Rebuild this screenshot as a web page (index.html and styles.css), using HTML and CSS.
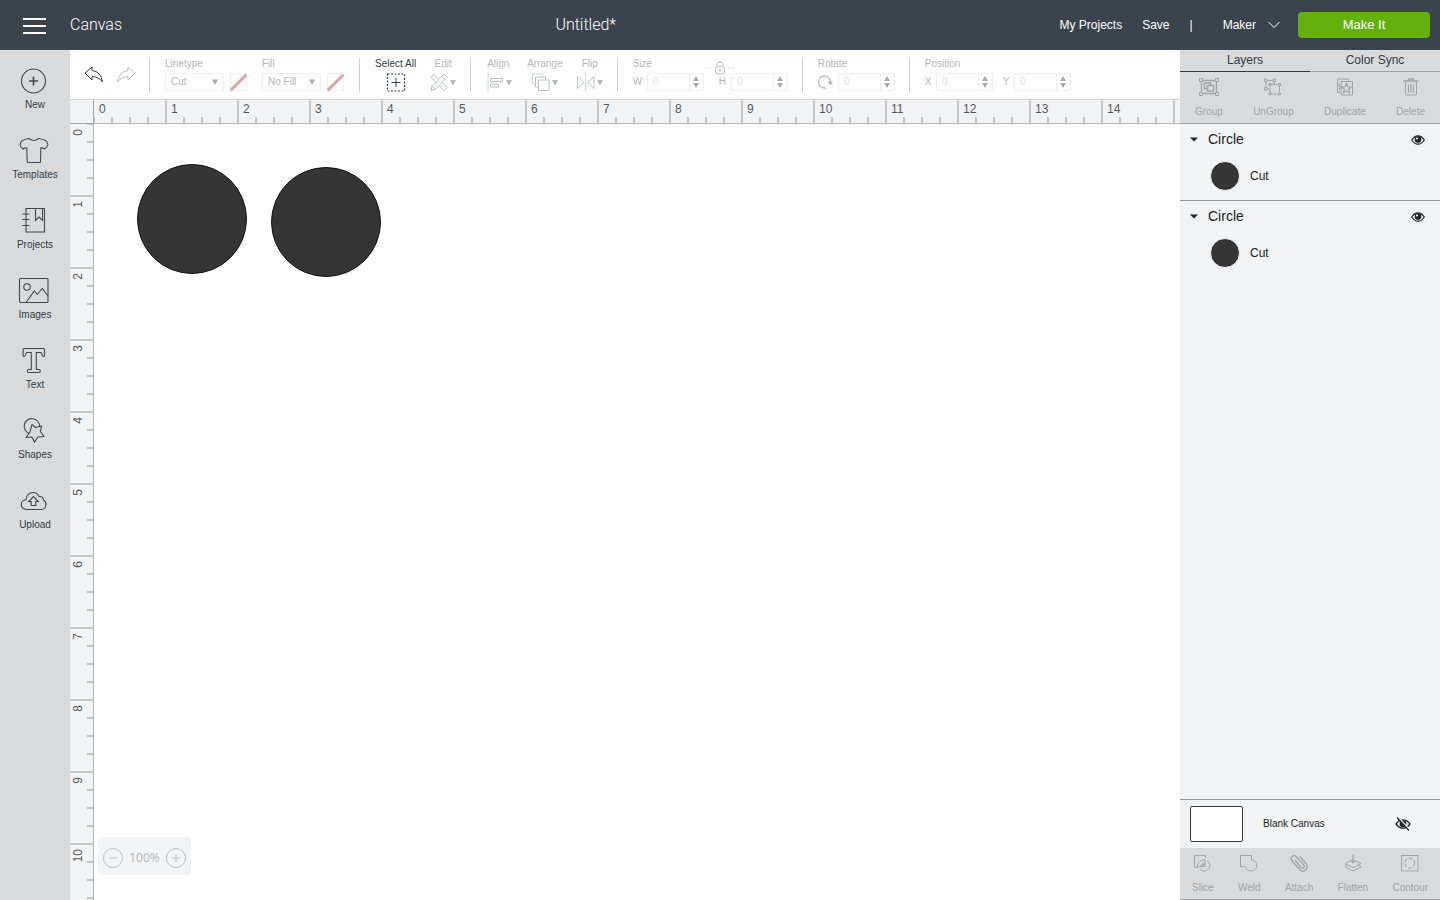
FILE: index.html
```html
<!DOCTYPE html>
<html lang="en">
<head>
<meta charset="utf-8">
<meta name="viewport" content="width=device-width, initial-scale=1">
<title>Canvas</title>
<link rel="stylesheet" href="styles.css">
</head>
<body>
<header class="topbar">
  <button class="menu" aria-label="Menu"><svg width="24" height="16" viewBox="0 0 24 16"><path d="M0 1h23M0 8h23M0 15h23" stroke="#fff" stroke-width="2"/></svg></button>
  <span class="light">Canvas</span>
  <h1 class="title light">Untitled*</h1>
  <nav class="topnav">
    <a href="#">My Projects</a>
    <a href="#">Save</a>
    <span class="bar">|</span>
    <button class="machine">Maker <svg width="12" height="8" viewBox="0 0 12 8"><path d="M.5 1 6 6.500 11.500 1" fill="none" stroke="#fff"/></svg></button>
    <button class="make">Make It</button>
  </nav>
</header>
<main class="app">
  <nav class="sidebar">
    <button><svg viewBox="1 0 30 28"><circle cx="14.500" cy="14" r="12"/><path d="M14.500 9.500v9M10 14h9" stroke-width="1.600"/></svg>New</button>
    <button><svg viewBox="1 0 30 28"><path d="M10 1.500Q14.800 5.500 19.600 1.500Q24.500 2.200 26.500 3.500Q28.500 5 29 7.500Q28.500 10 25.500 12Q23.500 10.500 21.800 11L21.500 24.500Q21.500 25.500 20.500 25.500H9.200Q8.200 25.500 8.200 24.500L7.800 11Q6 10.500 4 12Q1.500 10 1 7.500Q1.500 5 3.500 3.500Q5.500 2.200 10 1.500z"/></svg>Templates</button>
    <button><svg viewBox="1 0 30 28"><path d="M7 1.500h18.500v23.500H7zM3.500 7h7M3.500 12.500h7M3.500 18.500h7M16.500 1.500v12l3.500-3.500 3.500 3.500v-12"/></svg>Projects</button>
    <button><svg viewBox="1 0 30 28"><rect x=".5" y="1.500" width="28.500" height="24" rx="1"/><circle cx="8" cy="10" r="3.200"/><path d="M7 25.500 15.300 14l3 3.500 5-6 5.500 7.500"/></svg>Images</button>
    <button><svg viewBox="1 0 30 28"><path d="M4.500 1.500h20q1 0 1 1v6q0 1-1 1t-1.200-1l-.6-2q-.4-1-1.400-1h-4v17h2.500q1.500 0 1.500 1.500t-1.500 1.500h-10q-1.500 0-1.500-1.500t1.500-1.500h2.500v-17h-4q-1 0-1.400 1l-.6 2q-.2 1-1.200 1t-1-1v-6q0-1 .9-1z"/></svg>Text</button>
    <button><svg viewBox="1 0 30 28"><path d="M10 16.500A7.700 7.700 0 1 1 20.600 9.300"/><path d="M13 7.300 16.500 10.500 22.500 9 21.300 14.300 25 19.500 18.700 20 15.500 25.300 13 20 7 20.500 11 15z" stroke-linejoin="round"/></svg>Shapes</button>
    <button><svg viewBox="1 0 30 28"><path d="M8 22.500q-5.500-.3-5.800-5 .3-4.200 4.800-4.800 1-7.200 7-7.200 4.200 0 6 4 4.200-.5 4.500 3.800 2.500 1.200 2.500 4.400-.5 4.300-4.500 4.800z"/><path d="M12.200 18.500v-4H9.700l4.800-5 4.800 5h-2.500v4z"/></svg>Upload</button>
  </nav>

  <section class="editor">
    <div class="toolbar">
      <div class="group history">
        <button aria-label="Undo" class="on"><svg width="20" height="18" viewBox="0 0 20 18"><path d="M1 7 8 1v3.500q9 1 10.500 11.500-3-5-10.500-5.500V14z"/></svg></button>
        <button aria-label="Redo"><svg width="20" height="18" viewBox="0 0 20 18"><path d="M19 7 12 1v3.500q-9 1-10.500 11.500 3-5 10.500-5.500V14z"/></svg></button>
      </div>
      <div class="group linefill">
        <div class="tool">
          <label for="linetype">Linetype</label>
          <div class="row">
            <span class="pick"><select id="linetype"><option>Cut</option></select><svg width="6" height="6" viewBox="0 0 6 6"><path d="M0 .5h6L3 6z"/></svg></span>
            <button class="swatch" aria-label="Line color"><svg width="17" height="17" viewBox="0 0 17 17"><path d="M1.500 15.500 15.500 1.500"/></svg></button>
          </div>
        </div>
        <div class="tool">
          <label for="fill">Fill</label>
          <div class="row">
            <span class="pick"><select id="fill"><option>No Fill</option></select><svg width="6" height="6" viewBox="0 0 6 6"><path d="M0 .5h6L3 6z"/></svg></span>
            <button class="swatch" aria-label="Fill color"><svg width="17" height="17" viewBox="0 0 17 17"><path d="M1.500 15.500 15.500 1.500"/></svg></button>
          </div>
        </div>
      </div>
      <div class="group">
        <button class="tool mid on">Select All<svg width="20" height="19" viewBox="0 0 20 19"><path d="M1.500 1h17v17h-17z" stroke-dasharray="2 1.500" stroke-width="1.200"/><path d="M10 5v9M5.500 9.500h9"/></svg></button>
        <button class="tool mid">Edit<svg width="26" height="19" viewBox="0 0 26 19"><path d="M1 4.500 4 1.500l13 13-3 3zM3.500 7l1.500-1.500M6 9.500 7.500 8M10.500 14l1.500-1.500"/><path class="over" d="M1 17.500l1.200-4.700L13 2q1-1 2 0l1.300 1.300q1 1 0 2L5.500 16.200zM2.200 12.800l3.300 3.400M11.500 3.500l3.300 3.300"/><path class="tri" d="M20 7h6l-3 5.500z"/></svg></button>
      </div>
      <div class="group arrange">
        <button class="tool">Align<svg width="26" height="19" viewBox="0 0 26 19"><path d="M1 .5v18" stroke-dasharray="2 1"/><path d="M3.500 5.500h12v3h-12zM3.500 11h8v3h-8z"/><path class="tri" d="M19 7h6l-3 5.500z"/></svg></button>
        <button class="tool mid">Arrange<svg width="26" height="19" viewBox="0 0 26 19"><path d="M.5 1h10v10H.5z" stroke-dasharray="2 1"/><path class="over" d="M3.500 4h10v10h-10z"/><path class="over" d="M6.500 7h10.500v10.500H6.500z"/><path class="tri" d="M20 7h6l-3 5.500z"/></svg></button>
        <button class="tool mid">Flip<svg width="26" height="19" viewBox="0 0 26 19"><path d="M.5 3.500 7 9.500.5 15.500zM17 3.500 10.500 9.500 17 15.500z"/><path d="M8.700.5v18" stroke-dasharray="2 1"/><path class="tri" d="M20 7h6l-3 5.500z"/></svg></button>
      </div>
      <div class="group">
        <div class="tool size">
          <span>Size</span>
          <div class="row">
            <label class="wide" for="w">W</label>
            <span class="spin"><input id="w" value="0"><span class="steps"><button aria-label="Increase width"></button><button aria-label="Decrease width"></button></span></span>
            <label class="tall" for="h">H</label>
            <span class="spin"><input id="h" value="0"><span class="steps"><button aria-label="Increase height"></button><button aria-label="Decrease height"></button></span></span>
          </div>
          <button class="lock" aria-label="Lock proportions"><svg width="28" height="14" viewBox="0 0 28 14"><path d="M0 10V7h6M22 7h6v3" stroke="#e8e8e8" stroke-dasharray="3 1"/><rect x="9.500" y="5.500" width="9" height="7.500" rx="2.500"/><path d="M11 5.500V4q0-3 3-3t3 3v1.500M14 8.500v2.500M12.800 9.500h2.400"/></svg></button>
        </div>
      </div>
      <div class="group">
        <div class="tool">
          <label for="r">Rotate</label>
          <div class="row rotate">
            <svg width="15" height="17" viewBox="0 0 15 17"><path d="M8 13.800A6 6 0 1 1 12.500 8.500" stroke-width="1.300"/><path class="tri" d="M9.500 7.500h5.500l-2.500 4z"/></svg>
            <span class="spin"><input id="r" value="0"><span class="steps"><button aria-label="Rotate right"></button><button aria-label="Rotate left"></button></span></span>
          </div>
        </div>
      </div>
      <div class="group">
        <div class="tool">
          <span>Position</span>
          <div class="row">
            <label class="axis" for="x">X</label>
            <span class="spin"><input id="x" value="0"><span class="steps"><button aria-label="Increase X"></button><button aria-label="Decrease X"></button></span></span>
            <label class="axis next" for="y">Y</label>
            <span class="spin"><input id="y" value="0"><span class="steps"><button aria-label="Increase Y"></button><button aria-label="Decrease Y"></button></span></span>
          </div>
        </div>
      </div>
    </div>
    <div class="workspace">
      <div class="corner"></div>
      <div class="ruler across"><span>0</span><span>1</span><span>2</span><span>3</span><span>4</span><span>5</span><span>6</span><span>7</span><span>8</span><span>9</span><span>10</span><span>11</span><span>12</span><span>13</span><span>14</span><span></span></div>
      <div class="ruler down"><div><span>0</span></div><div><span>1</span></div><div><span>2</span></div><div><span>3</span></div><div><span>4</span></div><div><span>5</span></div><div><span>6</span></div><div><span>7</span></div><div><span>8</span></div><div><span>9</span></div><div><span>10</span></div></div>
      <div class="stage">
        <div class="shape first"></div>
        <div class="shape second"></div>
        <div class="zoom">
          <button aria-label="Zoom out"><svg width="20" height="20" viewBox="0 0 20 20"><circle cx="10" cy="10" r="9.500"/><path d="M6 10h8"/></svg></button>
          <span>100%</span>
          <button aria-label="Zoom in"><svg width="20" height="20" viewBox="0 0 20 20"><circle cx="10" cy="10" r="9.500"/><path d="M6 10h8M10 6v8"/></svg></button>
        </div>
      </div>
    </div>
  </section>

  <aside class="panel">
    <div class="tabs"><button class="active">Layers</button><button>Color Sync</button></div>
    <div class="actions upper">
      <button><svg width="20" height="18" viewBox="0 0 20 18"><path d="M2.500 2.500h15v13h-15z" stroke-width="1.300"/><path class="node" d="M.5.500h3v3h-3zM16.500.500h3v3h-3zM.5 14.500h3v3h-3zM16.500 14.500h3v3h-3z"/><path d="M8.500 10.500h-3V5h6v2.500M8.500 7.500h6V13h-6z" stroke-width="1.400"/></svg>Group</button>
      <button><svg width="20" height="18" viewBox="0 0 20 18"><path d="M3 2.500h8v8.500H3z"/><path class="node" d="M1.500 1h2.500v2.500H1.500zM10 1h2.500v2.500H10zM1.500 9.500h2.500v2.500H1.500z"/><path class="node" d="M7 6.500h9.500v9.500H7z"/><path class="node" d="M15.500 5.500h2v2h-2zM6 15h2v2H6zM15.500 15h2v2h-2zM6 5.500h2v2H6z"/></svg>UnGroup</button>
      <button><svg width="20" height="18" viewBox="0 0 20 18"><path d="M5 14.500H2.500V1h11v2"/><path d="M6 3.500h11.500v13.500H6z"/><path d="M11.500 5.500l1.300 3.300 3.500.2-2.700 2.200.9 3.500-3-1.900-3 1.900.9-3.500L6.700 9l3.500-.2zM3 6l2.500 2.500-1.300 3.500" stroke-width="1.100"/></svg>Duplicate</button>
      <button><svg width="20" height="18" viewBox="0 0 20 18"><path d="M2.500 3h15M7.500 3V1h5v2" stroke-width="1.500"/><path d="M4.500 4v12q0 1 1 1h9q1 0 1-1V4"/><path d="M7.500 6.500v8M10 6.500v8M12.500 6.500v8" stroke-width="1.200"/></svg>Delete</button>
    </div>
    <ul class="layers">
      <li>
        <div class="head"><button aria-label="Collapse"><svg width="8" height="5" viewBox="0 0 8 5"><path d="M0 .5h8L4 4.500z" fill="#222"/></svg></button><span>Circle</span><button class="eye" aria-label="Hide"><svg width="14" height="10" viewBox="0 0 14 10"><path d="M.7 5Q3.500.8 7 .8T13.300 5Q10.500 9.200 7 9.200T.7 5z" fill="none" stroke="#222" stroke-width="1.200"/><circle cx="7" cy="4.600" r="3.300" fill="#222"/><circle cx="6" cy="3.500" r="1.100" fill="#fff"/></svg></button></div>
        <div class="cut"><i></i>Cut</div>
      </li>
      <li>
        <div class="head"><button aria-label="Collapse"><svg width="8" height="5" viewBox="0 0 8 5"><path d="M0 .5h8L4 4.500z" fill="#222"/></svg></button><span>Circle</span><button class="eye" aria-label="Hide"><svg width="14" height="10" viewBox="0 0 14 10"><path d="M.7 5Q3.500.8 7 .8T13.300 5Q10.500 9.200 7 9.200T.7 5z" fill="none" stroke="#222" stroke-width="1.200"/><circle cx="7" cy="4.600" r="3.300" fill="#222"/><circle cx="6" cy="3.500" r="1.100" fill="#fff"/></svg></button></div>
        <div class="cut"><i></i>Cut</div>
      </li>
    </ul>
    <div class="blank"><i></i><span>Blank Canvas</span><button aria-label="Show canvas"><svg width="16" height="14" viewBox="0 0 16 14"><path d="M1 7Q4 2.800 8 2.800T15 7Q12 11.200 8 11.200T1 7z" fill="none" stroke="#222" stroke-width="1.300"/><circle cx="8" cy="6.800" r="3.400" fill="#222"/><path d="M3 .5 14.500 13" stroke="#f2f3f5" stroke-width="2"/><path d="M2 .5 14 13.500" stroke="#222" stroke-width="1.200"/></svg></button></div>
    <div class="actions lower">
      <button><svg width="20" height="18" viewBox="0 0 20 18"><path d="M5 13.500H1.500V1.500h11V4M4 13.500Q5 6 12 5.500v7H7z"/><path d="M14 6.500a5.600 5.600 0 1 1-7 8.500M7.500 12 12 7.500M9.500 12.500v-2h2.500"/></svg>Slice</button>
      <button><svg width="20" height="18" viewBox="0 0 20 18"><path d="M1.500 1.500h11v4.200a5.700 5.700 0 1 1-6 7h-5z"/></svg>Weld</button>
      <button><svg width="20" height="18" viewBox="0 0 20 18"><path d="M6 6l6 7.500q1.500 1.500 2.800.3t0-2.800L7.500 3Q5.500.5 3.300 2.300T3 6.500l7.500 9q3 3 6 .5t.8-6L11 2.500" stroke-width="1.300"/></svg>Attach</button>
      <button><svg width="20" height="18" viewBox="0 0 20 18"><path d="M10 .5v8M7.500 6 10 8.800 12.500 6" stroke-width="1.300"/><path d="M7 7 2 9.700l8 4 8-4L13 7M4.500 11.500 2 13l8 4 8-4-2.500-1.500"/></svg>Flatten</button>
      <button><svg width="20" height="18" viewBox="0 0 20 18"><rect x="1.500" y="1.500" width="16.500" height="15.500"/><circle cx="9.700" cy="9.200" r="5" stroke-dasharray="4 1.500"/></svg>Contour</button>
    </div>
  </aside>
</main>
</body>
</html>
```
FILE: styles.css
```css
* { box-sizing: border-box; }
body {
  margin: 0;
  height: 100vh;
  display: grid;
  grid-template-rows: 50px minmax(0, 1fr);
  font: 10px/12px "Liberation Sans", Arial, sans-serif;
  color: #333c45;
  background: #fff;
}
button, input, select { font: inherit; color: inherit; margin: 0; padding: 0; border: 0; background: none; border-radius: 0; }
svg { display: block; flex: none; overflow: visible; }
a { color: inherit; text-decoration: none; }

.topbar { display: flex; align-items: center; background: #3b434d; color: #fff; }
.menu { width: 70px; display: flex; justify-content: center; padding-top: 2px; }
.light { font: 300 16px/20px Roboto, "Liberation Sans", sans-serif; }
.title { flex: 1; margin: 0 10px 0 0; text-align: center; }
.topnav { display: flex; align-items: center; font-size: 12px; padding-right: 10px; }
.topnav a { margin-right: 20px; }
.bar { margin-right: 30px; }
.machine { display: flex; align-items: center; gap: 12px; margin-right: 18px; }
.make { width: 132px; height: 26px; border-radius: 4px; background: #62b10d; font-size: 13px; }

.app { display: grid; grid-template-columns: 70px minmax(0, 1fr) 260px; min-height: 0; }

.sidebar { background: #d9dadc; padding-top: 17px; }
.sidebar button { width: 100%; height: 70px; display: flex; flex-direction: column; align-items: center; gap: 4px; }
.sidebar svg { width: 30px; height: 28px; fill: none; stroke: #414950; stroke-width: 1.1; }

.editor { display: flex; flex-direction: column; min-height: 0; overflow: hidden; }
.toolbar { display: flex; height: 49px; padding: 8px 0 7px; color: #b4b6b8; flex: none; }
.toolbar svg { fill: none; stroke: #bdbfc1; }
.toolbar .on { color: #333c45; }
.toolbar .on svg { stroke: #333c45; }
.toolbar .tri { fill: #b4b6b8; stroke: none; }
.toolbar .over { fill: #fff; }
.group { display: flex; gap: 14px; padding: 0 14px 0 15px; border-right: 1px solid #cfd0d2; }
.group:last-child { border: 0; }
.history { gap: 12px; padding: 0 13px 0 14px; align-items: center; }
.history svg { stroke-linejoin: round; }
.linefill { gap: 15px; padding-right: 15px; }
.arrange { padding-left: 16px; }
.tool { display: flex; flex-direction: column; gap: 3px; align-items: flex-start; position: relative; }
.mid { align-items: center; }
.row { display: flex; align-items: center; height: 18px; }
.pick { position: relative; width: 59px; height: 18px; margin-right: 6px; }
.pick select { appearance: none; width: 100%; height: 100%; border: 1px solid #efefef; padding-left: 5px; opacity: 1; }
.pick svg { position: absolute; right: 6px; top: 6px; fill: #a9abad; stroke: none; pointer-events: none; }
.swatch { width: 17px; height: 18px; border: 1px solid #f0f0f0; display: flex; align-items: center; justify-content: center; }
.toolbar .swatch svg { stroke: #dba5a8; stroke-width: 3; stroke-linecap: round; }
.spin { display: flex; width: 57px; height: 18px; border: 1px solid #efefef; border-radius: 2px; }
.spin input { width: 42px; padding-left: 5px; color: #dedfe0; border-right: 1px solid #efefef; }
.steps { flex: 1; display: flex; flex-direction: column; align-items: center; justify-content: center; gap: 2px; }
.steps button { border: 3px solid transparent; border-top: 0; border-bottom: 5px solid #a9abad; }
.steps button + button { border-bottom: 0; border-top: 5px solid #a9abad; }
.wide { width: 14px; }
.tall { width: 12px; margin-left: 15px; }
.axis { width: 11px; }
.next { margin-left: 10px; }
.rotate { gap: 5px; }
.lock { position: absolute; left: 73px; top: 3px; }

.workspace { flex: 1; min-height: 0; display: grid; grid-template: 23px minmax(0, 1fr) / 23px minmax(0, 1fr); border-top: 1px solid #d4d5d7; }
.corner, .ruler { background-color: #f2f3f5; }
.ruler { display: flex; overflow: hidden; font-size: 12px; color: #55585c; }
.across > span {
  flex: 0 0 72px;
  border-left: 2px solid #c5c6c8;
  padding-left: 4px;
  line-height: 18px;
  background: repeating-linear-gradient(90deg, #c5c6c8 0 2px, transparent 2px 18px) left bottom / 100% 6px no-repeat border-box;
}
.across > span:first-child { border-left: 1px solid #a5a6a9; padding-left: 5px; }
.down { flex-direction: column; }
.down > div {
  flex: 0 0 72px;
  border-top: 2px solid #c5c6c8;
  padding-top: 4px;
  background: repeating-linear-gradient(180deg, #c5c6c8 0 2px, transparent 2px 18px) right top / 6px 100% no-repeat border-box;
}
.down > div:first-child { border-top: 1px solid #a5a6a9; padding-top: 5px; }
.down span { display: block; width: 17px; line-height: 17px; writing-mode: vertical-rl; transform: rotate(180deg); }
.stage { position: relative; border: solid #b4b5b8; border-width: 1px 0 0 1px; overflow: hidden; }
.shape { position: absolute; width: 110px; height: 110px; border-radius: 50%; background: #353535; border: 1px solid #111; }
.first { left: 43px; top: 40px; }
.second { left: 177px; top: 43px; }
.zoom {
  position: absolute; left: 4px; bottom: 25px; width: 93px; height: 38px; padding: 3px 5px 0;
  display: flex; align-items: center; justify-content: space-between;
  background: #f3f4f6; border-radius: 4px; color: #b4b6b8;
  font: 12px/16px "Open Sans", sans-serif;
}
.zoom svg { fill: none; stroke: #bdbfc1; }

.panel { display: flex; flex-direction: column; background: #f2f3f5; min-height: 0; }
.tabs { display: flex; height: 22px; background: #d9dadc; }
.tabs button { flex: 1; font-size: 12px; padding-bottom: 2px; border-bottom: 1px solid #a2a4a6; }
.tabs .active { border-bottom-color: #333c45; }
.actions { display: flex; justify-content: space-between; background: #d9dadc; color: #a2a4a6; border-bottom: 1px solid #a2a4a6; height: 52px; padding: 6px 15px 0; flex: none; }
.actions button { display: flex; flex-direction: column; align-items: center; gap: 10px; height: 40px; }
.actions svg { fill: none; stroke: #a2a4a6; }
.actions .node { fill: #d9dadc; }
.lower { padding: 6px 12px 0; }
.layers { list-style: none; margin: 0; padding: 0; flex: 1; color: #222; }
.layers li { height: 77px; padding: 6px 15px 0 10px; }
.layers li + li { border-top: 1px solid #95979a; }
.layers li:first-child { height: 76px; }
.head { display: flex; align-items: center; gap: 10px; font-size: 14px; line-height: 18px; }
.eye { margin-left: auto; padding-top: 2px; }
.cut { display: flex; align-items: center; gap: 10px; font-size: 12px; padding: 13px 0 0 20px; }
.cut i { width: 30px; height: 30px; border-radius: 50%; background: #353535; border: 1px solid #f2f3f5; }
.blank { display: flex; align-items: center; border-top: 1px solid #95979a; height: 49px; padding: 0 29px 0 10px; color: #222; flex: none; }
.blank i { width: 53px; height: 36px; border: 1px solid #333c45; border-radius: 2px; background: #fff; margin-right: 20px; }
.blank button { margin-left: auto; }
```
